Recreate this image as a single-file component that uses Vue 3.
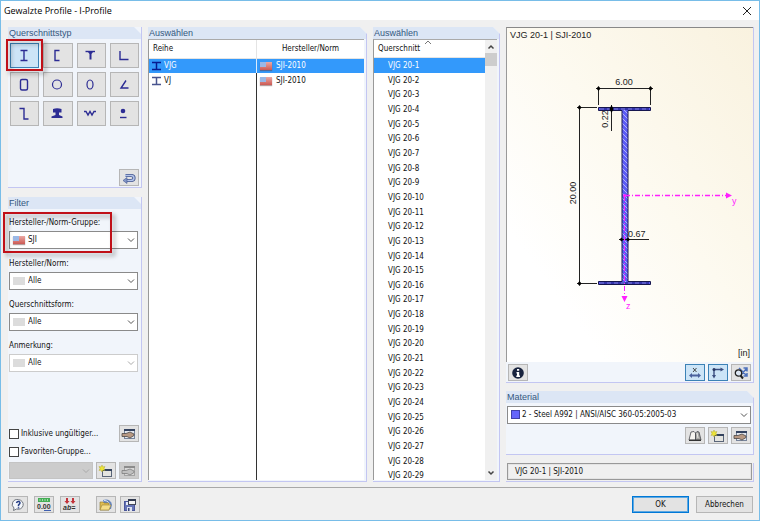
<script setup>
import { ref } from 'vue'

const profileTypes = [
  { id: 'i', label: 'I-Profil', d: 'M7.500 3.500h7M7.500 13.500h7M11 3.500v10' },
  { id: 'u', label: 'U-Profil', d: 'M13.500 3.500H9v10h4.500' },
  { id: 't', label: 'T-Profil', d: 'M6.500 4.500h9.500', solid: 'M9 5h5l-1.500 2v5.500h-2V7z' },
  { id: 'l', label: 'L-Profil', d: 'M8 4v8.500h8.500' },
  { id: 'box', label: 'Rechteckrohr', rect: true },
  { id: 'pipe', label: 'Rundrohr', ellipse: [4.5, 4.5] },
  { id: 'oval', label: 'Ovalrohr', ellipse: [3, 4.500] },
  { id: 'angle', label: 'Winkel', d: 'M14 4.500l-5 7.500h7.500' },
  { id: 'z', label: 'Z-Profil', d: 'M6.500 3.500h4.500v10.500h4.500' },
  { id: 'rail', label: 'Schiene', solid: 'M7 4q4-1.500 8.500 0v3.500h-2.500V10l3.500 1.500V13h-11v-1.500L9.500 10V7.500H7z' },
  { id: 'wave', label: 'Trapezblech', d: 'M5 6.500h2l2 3.500 2-3.500 2 3.500 2-3.500h2' },
  { id: 'round', label: 'Rundstahl', dot: true, d: 'M8 12.500h6.500' }
]
const filters = [
  { id: 'gruppe', label: 'Hersteller-/Norm-Gruppe:', value: 'SJI', flag: true },
  { id: 'norm', label: 'Hersteller/Norm:', value: 'Alle' },
  { id: 'form', label: 'Querschnittsform:', value: 'Alle' },
  { id: 'anmerkung', label: 'Anmerkung:', value: 'Alle', disabled: true }
]
const series = ['VJG', 'VJ']
const sections = Array.from({ length: 29 }, (_, i) => `VJG 20-${i + 1}`)
const selectedType = ref('i')
const selectedSeries = ref('VJG')
const selectedSection = ref('VJG 20-1')
</script>

<template>
  <div class="dialog">
    <header class="titlebar">
      <h1>Gewalzte Profile - I-Profile</h1>
      <button class="close" aria-label="Schließen">
        <svg width="10" height="10" viewBox="0 0 10 10"><path d="M1 1l8 8M9 1L1 9" stroke="#222" fill="none" /></svg>
      </button>
    </header>

    <main class="content">
      <div class="column left">
        <section class="group types">
          <h2>Querschnittstyp</h2>
          <div class="type-grid">
            <button
              v-for="t in profileTypes"
              :key="t.id"
              class="btn type"
              :class="{ active: selectedType === t.id }"
              :aria-label="t.label"
              @click="selectedType = t.id"
            >
              <svg width="22" height="17" viewBox="0 0 22 17" fill="none" stroke="#2c2c94" stroke-width="1.400">
                <path v-if="t.d" :d="t.d" />
                <path v-if="t.solid" :d="t.solid" fill="#2c2c94" stroke="none" />
                <rect v-if="t.rect" x="7.500" y="3.500" width="7" height="10.500" rx="1.500" />
                <ellipse v-if="t.ellipse" cx="11" cy="8.500" :rx="t.ellipse[0]" :ry="t.ellipse[1]" stroke-width="1.200" />
                <circle v-if="t.dot" cx="11" cy="6" r="2.300" fill="#2c2c94" stroke="none" />
              </svg>
            </button>
            <span class="callout callout-type"></span>
          </div>
          <div class="tools end">
            <button class="btn small" aria-label="Zurück">
              <svg width="14" height="12" viewBox="0 0 14 12" fill="none">
                <path d="M3.500 3.500h5.500q3 0 3 2.500t-3 2.500H5" stroke="#42568f" stroke-width="3.200" />
                <path d="M3 3.500h6q3 0 3 2.500t-3 2.500H4" stroke="#b4c4ea" stroke-width="1.400" />
                <path d="M5 5.500v6L1 8.500z" fill="#8296c8" stroke="#42568f" stroke-width=".6" />
              </svg>
            </button>
          </div>
        </section>

        <section class="group filter">
          <h2>Filter</h2>
          <div class="fields">
            <div v-for="f in filters" :key="f.id" class="field">
              <label :for="f.id">{{ f.label }}</label>
              <div class="combo">
                <select :id="f.id" :disabled="f.disabled"><option>{{ f.value }}</option></select>
                <span class="swatch" :class="{ flag: f.flag }"></span>
                <svg class="chevron" width="8" height="5" viewBox="0 0 8 5"><path d="M1 .5l3 3 3-3" /></svg>
              </div>
            </div>
            <span class="callout callout-group"></span>
          </div>
          <div class="options">
            <div class="option">
              <label><input type="checkbox" />Inklusive ungültiger...</label>
              <button class="btn small" aria-label="Ungültige bearbeiten">
                <svg width="14" height="12" viewBox="0 0 14 12">
                  <rect x="2.500" y="1.500" width="10" height="9" fill="#e4e8ef" stroke="#76839a" /><path d="M2 2h11" stroke="#33425f" stroke-width="2" />
                  <path d="M0 5.500h4l4-1.500 4 2v1.500l-4 2.500-3-1.500H0z" fill="#b89983" stroke="#4c4745" stroke-width=".8" />
                </svg>
              </button>
            </div>
            <div class="option">
              <label><input type="checkbox" />Favoriten-Gruppe...</label>
            </div>
            <div class="favorites">
              <div class="combo dim">
                <select aria-label="Favoriten-Gruppe" disabled></select>
                <svg class="chevron" width="8" height="5" viewBox="0 0 8 5"><path d="M1 .5l3 3 3-3" /></svg>
              </div>
              <button class="btn small" aria-label="Neue Gruppe">
                <svg width="14" height="12" viewBox="0 0 14 12">
                  <rect x="3.500" y="4.500" width="9" height="7" fill="#e4e4e0" stroke="#596579" /><path d="M3 5h10" stroke="#34435e" stroke-width="2" />
                  <path d="M3 0l1 2 2-.5-1 2 1 2-2-.5-1 2-1-2-2 .5 1-2-1-2 2 .5z" fill="#ece43a" stroke="#a69c20" stroke-width=".4" />
                </svg>
              </button>
              <button class="btn small" disabled aria-label="Gruppe bearbeiten">
                <svg width="14" height="12" viewBox="0 0 14 12">
                  <rect x="2.500" y="1.500" width="10" height="9" fill="#d8d8d8" stroke="#a4a4a4" /><path d="M2 2h11" stroke="#8c8c8c" stroke-width="2" />
                  <path d="M0 5.500h4l4-1.500 4 2v1.500l-4 2.500-3-1.500H0z" fill="#c0c0c0" stroke="#7e7e7e" stroke-width=".8" />
                </svg>
              </button>
            </div>
          </div>
        </section>
      </div>

      <section class="group">
        <h2>Auswählen</h2>
        <div class="listbox">
          <table>
            <colgroup><col class="col-series" /><col /></colgroup>
            <thead><tr><th>Reihe</th><th class="center">Hersteller/Norm</th></tr></thead>
            <tbody>
              <tr v-for="s in series" :key="s" :class="{ selected: selectedSeries === s }" @click="selectedSeries = s">
                <td>
                  <div class="cell">
                    <svg width="9" height="10" viewBox="0 0 9 10"><path d="M0 1.500h9M0 8.500h9M4.500 1.500v7" :stroke="selectedSeries === s ? '#071a90' : '#49558f'" stroke-width="1.500" /></svg>{{ s }}
                  </div>
                </td>
                <td><div class="cell norm"><span class="swatch flag"></span>SJI-2010</div></td>
              </tr>
              <tr class="filler"><td></td><td></td></tr>
            </tbody>
          </table>
        </div>
      </section>

      <section class="group">
        <h2>Auswählen</h2>
        <div class="listbox with-scroll">
          <div class="list">
            <div class="list-head">
              Querschnitt
              <svg class="sort" width="8" height="5" viewBox="0 0 8 5"><path d="M1 4l3-3 3 3" fill="none" stroke="#777" /></svg>
            </div>
            <div class="viewport">
              <ul>
                <li v-for="s in sections" :key="s" :class="{ selected: selectedSection === s }" @click="selectedSection = s">{{ s }}</li>
              </ul>
            </div>
          </div>
          <div class="scrollbar">
            <svg width="8" height="6" viewBox="0 0 8 6"><path d="M1.500 4.500L4 2l2.500 2.500" /></svg>
            <span class="thumb"></span>
            <svg width="8" height="6" viewBox="0 0 8 6"><path d="M1.500 1.500L4 4l2.500-2.500" /></svg>
          </div>
        </div>
      </section>

      <div class="column right">
        <section class="preview">
          <div class="drawing">
            <svg viewBox="0 0 246 334" role="img" aria-label="Querschnitt VJG 20-1">
              <defs>
                <pattern id="hatch" width="5" height="5" patternUnits="userSpaceOnUse">
                  <rect width="5" height="5" fill="#5c5cf6" /><path d="M-1 -1l7 7M-1 4l2 2M4 -1l2 2" stroke="#b4b4f4" />
                </pattern>
              </defs>
              <text x="3" y="10">{{ selectedSection }} | SJI-2010</text>
              <path d="M91.500 79.500h52v3H121v171h22.500v3h-52v-3H115v-171H91.500z" fill="url(#hatch)" stroke="#16164e" />
              <path d="M93 81h49M93 255h49" stroke="#3434ac" stroke-width="2" /><path d="M93 81h49M93 255h49" stroke="#8080e0" stroke-dasharray="4 3" />
              <g stroke="#222" fill="none">
                <path d="M89 60.500h57M91.500 60v17M143.500 60v17M72.500 78v179M70 79.500h20M70 255.500h20M104.500 77v26M112 211.500h30" />
              </g>
              <g fill="#000">
                <path d="M91.500 58l2 2.500-2 2.500-2-2.500zM143.500 58l2 2.500-2 2.500-2-2.500zM72.500 77l2 2.500-2 2.500-2-2.500zM72.500 253l2 2.500-2 2.500-2-2.500zM104.500 77l2 4-2 4-2-4zM114.500 209.500l2 2-2 2-2-2zM121 209.500l2 2-2 2-2-2z" />
              </g>
              <text x="117" y="57" text-anchor="middle">6.00</text>
              <text transform="translate(69 165) rotate(-90)" text-anchor="middle">20.00</text>
              <text transform="translate(101 91) rotate(-90)" text-anchor="middle">0.22</text>
              <text x="121" y="209">0.67</text>
              <g stroke="#ff20ff" fill="none" stroke-dasharray="5 2 1 2"><path d="M118 167.500h101" stroke-width="1.300" /><path d="M117.500 168v101" /></g>
              <g class="axis"><path d="M219 164.500l6 3-6 3zM114.500 268h6l-3 6z" /><circle cx="117.500" cy="167.500" r="1.500" /><text x="225" y="176">y</text><text x="119" y="281">z</text></g>
              <text x="243" y="328" text-anchor="end">[in]</text>
            </svg>
          </div>
          <div class="tools preview-tools">
            <button class="btn small" aria-label="Info">
              <svg width="12" height="12" viewBox="0 0 12 12"><circle cx="6" cy="6" r="5.800" fill="#18233e" /><path d="M5 2h2.200v1.800H5zM4.500 5h2.700v3.500H8V10H4.300V8.500H5v-2h-.5z" fill="#fff" /></svg>
            </button>
            <span class="spacer"></span>
            <button class="btn small active" aria-label="Bemaßung">
              <svg width="14" height="12" viewBox="0 0 14 12" fill="none" stroke="#4a629e"><path d="M5 1l3.500 4M8.500 1L5 5" stroke="#333" stroke-width=".9" /><path d="M3 8.500h8" stroke-width="2" /><path d="M1 8.500l3-2.500v5zM13 8.500L10 6v5z" fill="#4a629e" stroke="none" /></svg>
            </button>
            <button class="btn small active" aria-label="Achsen">
              <svg width="14" height="12" viewBox="0 0 14 12" fill="none" stroke="#3b4e80"><path d="M3 9V2.500h7" stroke-width="1.400" /><path d="M9.500 .5l3.500 2-3.500 2zM1 8h4l-2 3.500z" fill="#3b4e80" stroke="none" /><circle cx="3" cy="2.500" r="1.500" fill="#283762" stroke="none" /></svg>
            </button>
            <button class="btn small" aria-label="Alles zeigen">
              <svg width="14" height="12" viewBox="0 0 14 12" fill="none"><path d="M5 1l8 8M13 1L6 9M9.500 1H13v3.500M13 6v3H9.500" stroke="#4e72bd" stroke-width="1.500" /><circle cx="4.500" cy="6" r="3.200" stroke="#222" stroke-width="1.300" fill="#dce6f3" /><path d="M6.500 8.500L9 11.500" stroke="#222" stroke-width="2" /></svg>
            </button>
          </div>
        </section>

        <section class="group material">
          <h2>Material</h2>
          <div class="material-body">
            <div class="combo">
              <select aria-label="Material"><option>2 - Steel A992 | ANSI/AISC 360-05:2005-03</option></select>
              <span class="swatch color"></span>
              <svg class="chevron" width="8" height="5" viewBox="0 0 8 5"><path d="M1 .5l3 3 3-3" /></svg>
            </div>
            <div class="tools end">
              <button class="btn small" aria-label="Bibliothek">
                <svg width="14" height="12" viewBox="0 0 14 12"><path d="M1 10l2-8 3-.5L7.500 3v7z" fill="#f6f5f0" stroke="#45484e" stroke-width=".8" /><path d="M7.500 3L9 1.500l2 .5 2 8H7.500z" fill="#a9a9a5" stroke="#45484e" stroke-width=".8" /><path d="M9 3l1 5" stroke="#e8e8e4" /><path d="M1 10.300h12" stroke="#333" stroke-width="1.200" /></svg>
              </button>
              <button class="btn small" aria-label="Neues Material">
                <svg width="14" height="12" viewBox="0 0 14 12">
                  <rect x="3.500" y="4.500" width="9" height="7" fill="#e4e4e0" stroke="#596579" /><path d="M3 5h10" stroke="#34435e" stroke-width="2" />
                  <path d="M3 0l1 2 2-.5-1 2 1 2-2-.5-1 2-1-2-2 .5 1-2-1-2 2 .5z" fill="#ece43a" stroke="#a69c20" stroke-width=".4" />
                </svg>
              </button>
              <button class="btn small" aria-label="Material bearbeiten">
                <svg width="14" height="12" viewBox="0 0 14 12">
                  <rect x="2.500" y="1.500" width="10" height="9" fill="#e4e8ef" stroke="#76839a" /><path d="M2 2h11" stroke="#33425f" stroke-width="2" />
                  <path d="M0 5.500h4l4-1.500 4 2v1.500l-4 2.500-3-1.500H0z" fill="#b89983" stroke="#4c4745" stroke-width=".8" />
                </svg>
              </button>
            </div>
          </div>
        </section>

        <div class="status"><output>{{ selectedSection }} | SJI-2010</output></div>
      </div>
    </main>

    <footer class="footer">
      <button class="btn small" aria-label="Hilfe">
        <svg width="14" height="12" viewBox="0 0 14 12" fill="none"><path d="M7.500 .7a5 4.800 0 1 1-2 9.300L2.500 11.500l.5-2.500A5 4.800 0 0 1 7.500 .7z" fill="#f4f7fb" stroke="#70757e" /><path d="M5.500 4q.5-1.700 2.200-1.500 1.800.5 1.100 2L7.500 6v1.300M7.500 8.300v1.200" stroke="#253e86" stroke-width="1.500" /></svg>
      </button>
      <button class="btn small gap-s" aria-label="Einheiten">
        <svg width="16" height="13" viewBox="0 0 16 13"><path d="M2 0h12v4H2z" fill="#43ad54" /><path d="M4 1v2M6.500 1v2M9 1v2M11.500 1v2" stroke="#a4dfac" /><text x="1" y="11" class="tiny">0.00</text><path d="M8 12.500h7" stroke="#3f5fb0" /></svg>
      </button>
      <button class="btn small gap-s" aria-label="Bezeichnung">
        <svg width="16" height="13" viewBox="0 0 16 13"><path d="M4 0h2v3h1.500L5 6 2.500 3H4zM10 0h2v3h1.500L11 6 8.500 3H10z" fill="#c3333b" /><text x="1" y="12" class="tiny italic">ab=</text></svg>
      </button>
      <button class="btn small gap-l" aria-label="Öffnen">
        <svg width="14" height="12" viewBox="0 0 14 12"><path d="M4 1q7-2 9 4.500l-1 4.500H6z" fill="#6685be" /><path d="M5 1.500q5 0 6 5.500" stroke="#dce8fb" fill="none" /><path d="M1 3h3l1 1h5v7H1z" fill="#e0bd51" stroke="#8c762e" stroke-width=".6" /><path d="M3 6h9l-2 5H1z" fill="#f4dd88" stroke="#98803b" stroke-width=".6" /></svg>
      </button>
      <button class="btn small" aria-label="Speichern">
        <svg width="14" height="12" viewBox="0 0 14 12"><rect x="1.500" y="2.500" width="10" height="9" fill="#6674b7" stroke="#4a569a" /><path d="M3 3h6v3H3z" fill="#e8ecf8" /><path d="M4 8h5v4H4z" fill="#dde2ee" /><path d="M5 9h1.500v3H5z" fill="#39457f" /><rect x="5.500" y="1" width="7" height="4.500" fill="#f4f4f4" stroke="#454a58" /><path d="M5 1h8" stroke="#333b50" stroke-width="2" /></svg>
      </button>
      <span class="spacer"></span>
      <button class="btn text primary">OK</button>
      <button class="btn text">Abbrechen</button>
    </footer>
  </div>
</template>

<style>
body { margin: 0; background: #fff; }
</style>

<style scoped>
* { box-sizing: border-box; }
.dialog {
  display: flex;
  flex-direction: column;
  height: calc(100vh - 1px);
  min-height: 440px;
  border: 1px solid #78bde8;
  background: #f0f0f0;
  color: #111;
  font: 8px/12px "DejaVu Sans Condensed", "DejaVu Sans", sans-serif;
}
button, select, input { font: inherit; color: inherit; margin: 0; }
svg { display: block; flex: none; overflow: visible; }
.titlebar { display: flex; justify-content: space-between; align-items: center; height: 19px; padding: 0 7px 0 3px; background: #fff; }
h1 { margin: 0; font: 9px/16px "Open Sans", sans-serif; color: #000; }
.close { display: flex; padding: 0; border: 0; background: none; }
.content {
  flex: 1;
  min-height: 0;
  display: grid;
  grid-template-columns: 134fr 219fr 127fr 248fr;
  grid-template-rows: minmax(0, 1fr);
  gap: 6px;
  padding: 7px 5px 0 7px;
}
.column { display: flex; flex-direction: column; min-width: 0; min-height: 0; }
.left { gap: 9px; }
.right { gap: 8px; }
.group {
  display: flex;
  flex-direction: column;
  min-width: 0;
  min-height: 0;
  background: #f1f5fb;
  border-right: 1px solid #c3c6f2;
  border-bottom: 1px solid #c3c6f2;
  clip-path: polygon(0 0, calc(100% - 7px) 0, 100% 7px, 100% 100%, 0 100%);
}
h2 { margin: 0; padding-left: 1px; height: 12px; font: 9px/12px "Liberation Sans", sans-serif; color: #34587f; background: #dce6f5; }
.btn { display: flex; align-items: center; justify-content: center; padding: 0; border: 1px solid #b6b6b6; background: #e3e3e3; }
.btn.small { width: 20px; height: 17px; flex: none; }
.btn.active { background: #cce4f7; border-color: #3c82b6; }
.btn:disabled { background: #ccc; border-color: #c4c4c4; }
.types { flex: none; height: 161px; clip-path: none; }
.types h2, .filter h2 { clip-path: polygon(0 0, calc(100% - 7px) 0, 100% 7px, 100% 100%, 0 100%); }
.type-grid { position: relative; display: grid; grid-template-columns: repeat(4, 1fr); gap: 4px; padding: 4px 2px 0; }
.type { height: 25px; padding-right: 2px; }
.callout { position: absolute; border: 2px solid #c01018; filter: drop-shadow(3px 3px 2px rgba(0, 0, 0, .35)); pointer-events: none; }
.callout-type { left: -2px; top: 0; width: 37px; height: 32px; }
.callout-group { left: -5px; top: 3px; width: 109px; height: 41px; }
.tools { display: flex; gap: 3px; }
.end { justify-content: flex-end; }
.types .tools { margin-top: auto; padding: 0 2px 1px; }
.filter { flex: 1; clip-path: none; }
.fields { position: relative; display: grid; gap: 9px; padding: 8px 3px 0 1px; }
.field { display: grid; gap: 2px; }
.combo { position: relative; display: flex; flex: 1; min-width: 0; }
.combo select {
  appearance: none;
  width: 100%;
  height: 18px;
  padding: 0 12px 0 18px;
  border: 1px solid #8a8a8a;
  border-radius: 0;
  background: #fff;
  opacity: 1;
}
.combo select:disabled { border-color: #ccc; color: #1c1c1c; }
.combo .swatch { position: absolute; left: 4px; top: 5px; pointer-events: none; }
.swatch { width: 12px; height: 8px; background: #dcdcdc; }
.swatch.flag { background: linear-gradient(#9ab8e6, #9ab8e6) 0 0 / 6px 5px no-repeat, linear-gradient(#eba9a4, #cc5a55); box-shadow: 0 1px 1px rgba(110, 60, 60, .5); }
.combo .color { left: 4px; top: 4px; width: 9px; height: 9px; background: #6464fb; border: 1px solid #4040a8; }
.chevron { position: absolute; right: 3px; top: 7px; pointer-events: none; }
.chevron path { fill: none; stroke: #555; }
select:disabled ~ .chevron path { stroke: #aaa; }
.options { display: grid; gap: 4px; margin-top: auto; padding: 0 2px 2px 1px; }
.option { display: flex; justify-content: space-between; align-items: center; }
.option label { display: flex; align-items: center; gap: 2px; white-space: nowrap; }
.option input { appearance: none; width: 10px; height: 10px; border: 1px solid #444; background: #fff; }
.favorites { display: flex; gap: 3px; }
.combo.dim select { height: 17px; background: #ccc; border-color: #c4c4c4; }
.listbox { flex: 1; min-height: 0; margin-right: 2px; margin-bottom: 1px; border-left: 1px solid #999; border-top: 1px solid #aaa; background: #fff; }
table { width: 100%; height: 100%; border-collapse: collapse; table-layout: fixed; }
.col-series { width: 50%; }
th, td { padding: 0; font-weight: 400; text-align: left; }
th { height: 18px; padding-left: 4px; border-bottom: 1px solid #e4e4e4; }
th:first-child { border-right: 1px solid #e4e4e4; }
th.center { text-align: center; padding: 0; }
td { height: 15px; }
td:first-child { border-right: 1px solid #333; }
tr.filler td { height: auto; }
.cell { display: flex; align-items: center; gap: 3px; padding-left: 3px; }
.cell.norm { gap: 4px; }
.selected { background: #3399fb; color: #fff; }
.selected td:first-child { border-right-color: #dcebfb; }
.with-scroll { display: flex; }
.list { flex: 1; min-width: 0; display: flex; flex-direction: column; }
.list-head { position: relative; flex: none; height: 18px; padding-left: 4px; line-height: 18px; border-bottom: 1px solid #e4e4e4; }
.sort { position: absolute; left: 50px; top: 0; }
.viewport { flex: 1; min-height: 0; overflow: hidden; }
ul { display: grid; grid-template-rows: repeat(29, minmax(0, 1fr)); height: calc(100% + 3px); margin: 0; padding: 0; list-style: none; }
li { padding-left: 14px; line-height: 15px; }
.scrollbar { display: flex; flex-direction: column; align-items: center; width: 12px; padding: 4px 0; background: #f0f0f0; }
.scrollbar path { fill: none; stroke: #444; stroke-width: 1.5; }
.scrollbar .thumb { width: 100%; height: 13px; margin: 3px 0 auto; background: #cdcdcd; }
.preview { flex: 1; min-height: 0; display: flex; flex-direction: column; background: #f1f5fb; border-right: 1px solid #c3c6f2; border-bottom: 1px solid #c3c6f2; }
.drawing { flex: 1; min-height: 0; border-left: 1px solid #999; border-top: 1px solid #888; background: linear-gradient(to top right, #fff 20%, #fdfaf0 55%, #f9f2df); }
.drawing svg { width: 100%; height: 100%; }
.drawing text { font: 9px "Liberation Sans", sans-serif; fill: #222; }
.drawing .axis, .drawing .axis text { fill: #ff20ff; }
.preview-tools { padding: 2px 2px 1px; }
.spacer { flex: 1; }
.material-body { display: grid; gap: 3px; padding: 3px 2px 10px 1px; }
.material .combo select { padding-left: 14px; }
.status { padding: 0 1px 1px; border-right: 1px solid #c3c6f2; border-bottom: 1px solid #c3c6f2; }
.status output { display: block; padding: 2px 7px 1px; border: 1px solid #999; box-shadow: inset 0 0 0 1px #e4e4e4; }
.footer { display: flex; align-items: center; gap: 4px; margin: 5px 6px 0 7px; padding: 8px 0 7px; border-top: 1px solid #a8a8a8; }
.gap-s { margin-left: 2px; }
.gap-l { margin-left: 12px; }
.tiny { font: 700 7px "Liberation Sans", sans-serif; fill: #333; }
.italic { font-style: italic; }
.btn.text { width: 57px; height: 17px; }
.btn.primary { margin-right: 3px; border-color: #0078d7; box-shadow: inset 0 0 0 1px #5fa8e0; }
</style>
